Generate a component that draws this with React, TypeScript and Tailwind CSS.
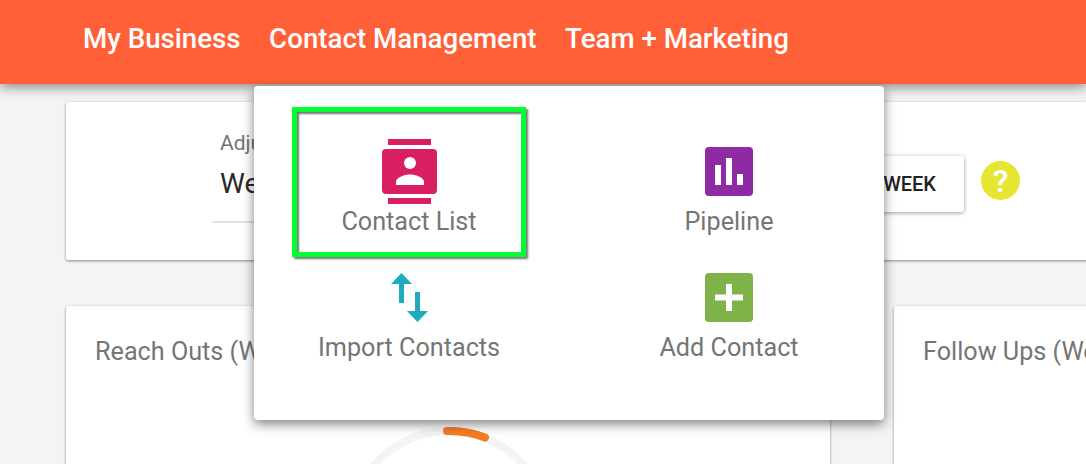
export default function App() {
  const roboto = "font-['Roboto',sans-serif]";
  return (
    <div className={`relative h-[464px] w-[1086px] overflow-hidden bg-[#f4f4f4] ${roboto}`}>
      <header className="relative z-10 flex h-[84px] items-center gap-[28.5px] bg-[#ff6037] pb-[7px] pl-[83px] text-[27.7px] font-medium text-white shadow-[0_3px_12px_rgba(0,0,0,0.45)]">
        <span>My Business</span>
        <span>Contact Management</span>
        <span>Team + Marketing</span>
      </header>

      <main className="pl-[66px] pt-[18px]">
        <section className="flex h-[158px] w-[1040px] rounded-[2px] bg-white pl-[146px] shadow-[0_1px_3px_rgba(0,0,0,0.45)]">
          <div className="w-[480px] pt-[27px]">
            <div className="pl-[8px] text-[21px] leading-[28px] text-[#757575]">Adjust</div>
            <div className="mt-[10px] border-b-2 border-[#e3e3e3] pb-[20px] pl-[8px] text-[28px] leading-[34px] text-[#2a2a2a]">Week</div>
          </div>
          <div className="ml-[82px] mt-[54px] flex h-[56px] w-[190px] items-center justify-end rounded-[3px] bg-white pr-[28px] text-[20px] font-medium text-[#222222] shadow-[0_1px_4px_rgba(0,0,0,0.4)]">
            THIS WEEK
          </div>
          <div className="ml-[17px] mt-[59px] flex h-[39px] w-[39px] items-center justify-center rounded-full bg-[#e6e632] text-[32px] font-medium leading-none text-white">?</div>
        </section>

        <div className="mt-[46px] flex gap-[64px]">
          <section className="h-[300px] w-[764px] shrink-0 rounded-[2px] bg-white pl-[29px] pt-[29px] shadow-[0_1px_3px_rgba(0,0,0,0.45)]">
            <div className="text-[25.2px] leading-[34px] text-[#757575]">Reach Outs (Weekly)</div>
            <svg className="ml-[251px] mt-[58px] block" width="206" height="206" viewBox="0 0 206 206" fill="none">
              <circle cx="103" cy="103" r="99" stroke="#f4f4f4" strokeWidth="8" />
              <path d="M101 4 A99 99 0 0 1 139 10.500" stroke="#f57c26" strokeWidth="8" strokeLinecap="round" />
            </svg>
          </section>
          <section className="h-[300px] w-[300px] shrink-0 rounded-[2px] bg-white pl-[29px] pt-[29px] shadow-[0_1px_3px_rgba(0,0,0,0.45)]">
            <div className="whitespace-nowrap text-[25.2px] leading-[34px] text-[#757575]">Follow Ups (Weekly)</div>
          </section>
        </div>
      </main>

      <nav className="absolute left-[254px] top-[86px] z-20 grid h-[334px] w-[630px] grid-cols-[310px_310px] content-start gap-x-[10px] rounded-[4px] bg-white pt-[21px] text-[25.2px] leading-[34px] text-[#757575] shadow-[0_4px_12px_rgba(0,0,0,0.5)]">
        <div className="ml-[38px] flex h-[150px] w-[234px] flex-col items-center border-[5px] border-[#00ff33] pt-[27px] shadow-[2px_2px_2px_rgba(0,0,0,0.55),inset_2px_2px_2px_rgba(0,0,0,0.55)]">
          <svg width="55" height="65" viewBox="0 0 55 65" className="block">
            <rect x="6" y="0" width="43" height="6" fill="#d81f63" />
            <rect x="6" y="59" width="43" height="6" fill="#d81f63" />
            <rect x="0" y="10" width="55" height="45" rx="4" fill="#d81f63" />
            <circle cx="28" cy="24" r="6" fill="#fff" />
            <path d="M14 46 v-3 c0-5 9-7.500 14-7.500 s14 2.500 14 7.500 v3 z" fill="#fff" />
          </svg>
          <span className="mt-[1px]">Contact List</span>
        </div>

        <div className="flex flex-col items-center pt-[40px]">
          <svg width="48" height="49" viewBox="0 0 48 49" className="block">
            <rect width="48" height="49" rx="4" fill="#8e2aa3" />
            <rect x="10" y="18" width="6" height="20" fill="#fff" />
            <rect x="21" y="11" width="6" height="27" fill="#fff" />
            <rect x="32" y="27" width="6" height="11" fill="#fff" />
          </svg>
          <span className="mt-[9px]">Pipeline</span>
        </div>

        <div className="flex flex-col items-center pt-[16px]">
          <svg width="37" height="49" viewBox="0 0 37 49" className="block">
            <path d="M10.500 0 L21 11 H13 V30 H8 V11 H0 Z" fill="#1eabc0" />
            <path d="M24 19 H29 V38 H37 L26.500 49 L16 38 H24 Z" fill="#1eabc0" />
          </svg>
          <span className="mt-[9px]">Import Contacts</span>
        </div>

        <div className="flex flex-col items-center pt-[16px]">
          <svg width="48" height="49" viewBox="0 0 48 49" className="block">
            <rect width="48" height="49" rx="4" fill="#7fb34a" />
            <rect x="10" y="21.500" width="28" height="6" fill="#fff" />
            <rect x="21" y="11" width="6" height="27" fill="#fff" />
          </svg>
          <span className="mt-[9px]">Add Contact</span>
        </div>
      </nav>
    </div>
  );
}
